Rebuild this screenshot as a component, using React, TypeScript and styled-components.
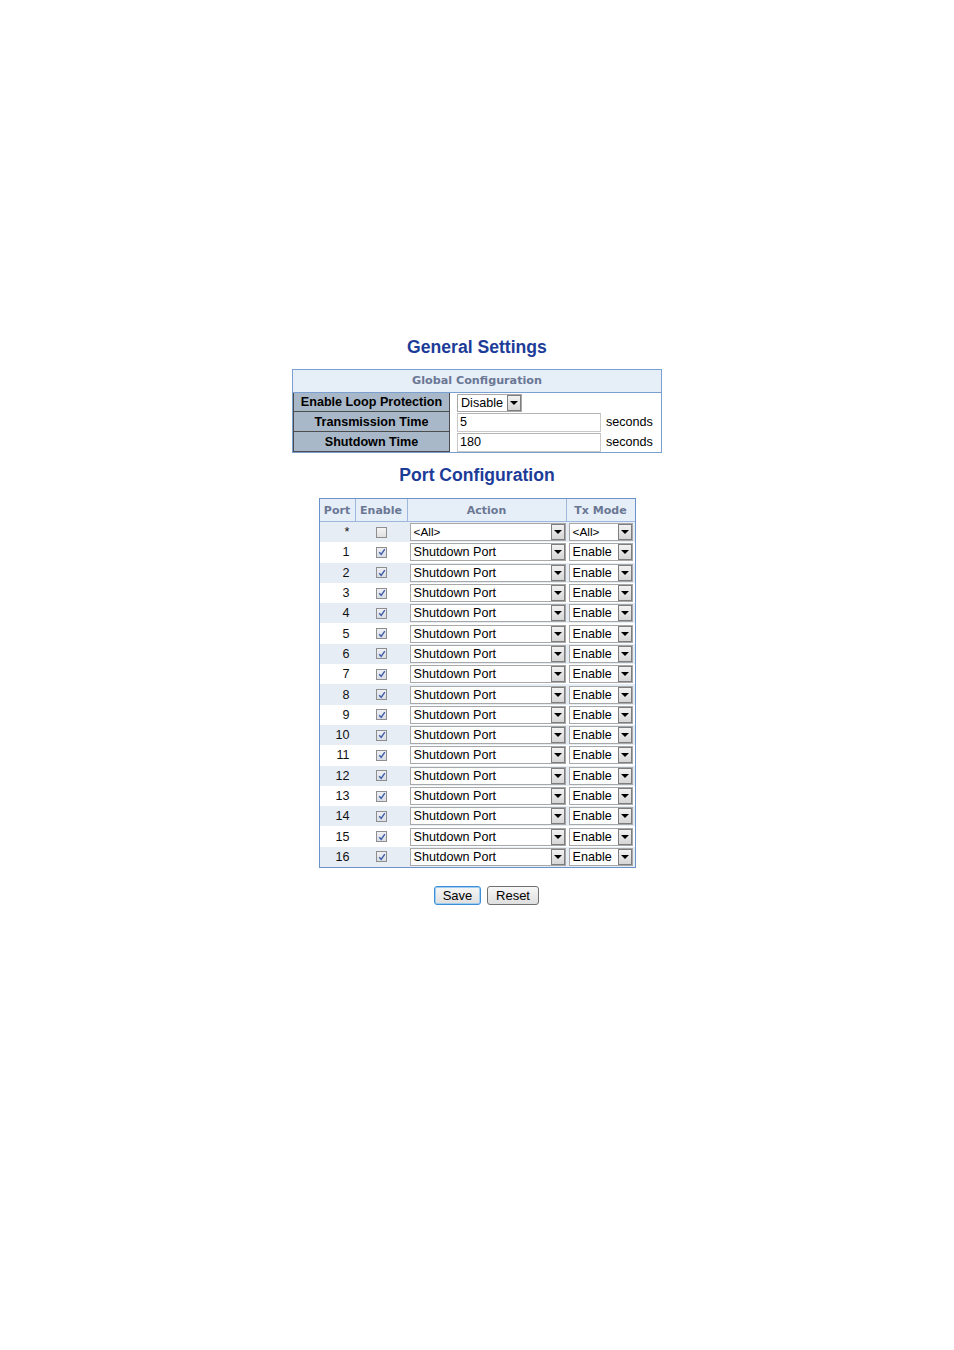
import React from "react";
import styled, { createGlobalStyle } from "styled-components";

const Global = createGlobalStyle`
  html, body { margin: 0; padding: 0; background: #ffffff; }
  body { font-family: "Liberation Sans", Arial, sans-serif; color: #000; }
`;

const Page = styled.div`
  width: 954px;
  min-height: 1350px;
  padding-top: 337px;
  box-sizing: border-box;
  display: flex;
  flex-direction: column;
  align-items: center;
`;

const Title = styled.h1<{ $mt?: number }>`
  margin: ${(p) => p.$mt ?? 0}px 0 0 0;
  height: 20px;
  line-height: 20px;
  font-family: "Liberation Sans", Arial, sans-serif;
  font-weight: bold;
  font-size: 17.6px;
  color: #1c3c98;
  text-align: center;
`;

const GlobalTable = styled.div`
  margin-top: 12px;
  width: 370px;
  box-sizing: border-box;
  border: 1px solid #7aa0d2;
  display: grid;
  grid-template-columns: 157px 1fr;
  grid-template-rows: 23px 19px 20px 20px;
  background: #fff;
`;

const GlobalHeader = styled.div`
  grid-column: 1 / span 2;
  line-height: 22px;
  background: #e6eef8;
  border-bottom: 1px solid #7aa0d2;
  text-align: center;
  font-family: "DejaVu Sans", Verdana, sans-serif;
  font-weight: bold;
  font-size: 11.2px;
  color: #6a7794;
`;

const LabelCell = styled.div`
  background: #a9b8c8;
  border: 1px solid #4d4d4d;
  border-top: none;
  box-sizing: border-box;
  display: flex;
  align-items: center;
  justify-content: center;
  font-weight: bold;
  font-size: 12.6px;
  color: #000;
  white-space: nowrap;
`;

const ValueCell = styled.div`
  display: flex;
  align-items: center;
  gap: 5px;
  padding-left: 7px;
`;

const Seconds = styled.span`
  font-size: 12.6px;
`;

const TextInput = styled.div`
  width: 144px;
  height: 19px;
  box-sizing: border-box;
  border: 1px solid #c9c9c9;
  border-top-color: #b5b5b5;
  font-size: 12.6px;
  line-height: 17px;
  padding-left: 2px;
  background: #fff;
`;

const SelectBox = styled.div<{ $w: number }>`
  width: ${(p) => p.$w}px;
  height: 18px;
  box-sizing: border-box;
  border: 1px solid #a8a8a8;
  background: #fff;
  display: flex;
  align-items: stretch;
`;

const SelectText = styled.span<{ $small?: boolean }>`
  flex: 1;
  padding-left: 3px;
  font-size: ${(p) => (p.$small ? 11.8 : 12.6)}px;
  line-height: 16px;
  white-space: nowrap;
  overflow: hidden;
`;

const ArrowBox = styled.span`
  width: 14px;
  box-sizing: border-box;
  margin: 0 0 0 1px;
  border: 1px solid #7e7e7e;
  background: linear-gradient(#f2f2f2, #d6d6d6);
  display: flex;
  align-items: center;
  justify-content: center;
`;

const Select: React.FC<{ w: number; value: string; small?: boolean }> = ({ w, value, small }) => (
  <SelectBox $w={w}>
    <SelectText $small={small}>{value}</SelectText>
    <ArrowBox>
      <svg width="8" height="4" viewBox="0 0 8 4">
        <polygon points="0,0 8,0 4,4" fill="#000" />
      </svg>
    </ArrowBox>
  </SelectBox>
);

const PortTable = styled.div`
  margin-top: 13px;
  width: 317px;
  box-sizing: border-box;
  border: 1px solid #6b93c9;
  display: flex;
  flex-direction: column;
`;

const Cols = "36px 52px 159px 1fr";

const HeadRow = styled.div`
  display: grid;
  grid-template-columns: ${Cols};
  height: 22px;
  background: #e6eef8;
  border-bottom: 1px solid #9db8dc;
`;

const HeadCell = styled.div<{ $last?: boolean }>`
  border-right: ${(p) => (p.$last ? "none" : "1px solid #9db8dc")};
  text-align: center;
  line-height: 23px;
  font-family: "DejaVu Sans", Verdana, sans-serif;
  font-weight: bold;
  font-size: 11px;
  color: #6a7794;
  white-space: nowrap;
`;

const Row = styled.div<{ $shaded: boolean }>`
  display: grid;
  grid-template-columns: ${Cols};
  height: 20.3px;
  background: ${(p) => (p.$shaded ? "#e7edf5" : "#ffffff")};
  align-items: center;
`;

const PortCell = styled.div`
  text-align: right;
  padding-right: 6px;
  font-size: 12.6px;
  color: #111;
`;

const CenterCell = styled.div`
  display: flex;
  justify-content: center;
  align-items: center;
`;

const SelCell = styled.div`
  display: flex;
  align-items: center;
  padding-left: 2px;
`;

const CheckBox = styled.span<{ $checked: boolean }>`
  width: 11px;
  height: 11px;
  box-sizing: border-box;
  border: 1px solid #8e8e8e;
  background: ${(p) => (p.$checked ? "linear-gradient(#eef0f4, #d9dde5)" : "linear-gradient(#f4f4f4, #e0e0e0)")};
  display: flex;
  align-items: center;
  justify-content: center;
`;

const Buttons = styled.div`
  margin-top: 18px;
  margin-left: 19px;
  display: flex;
  gap: 6px;
`;

const Button = styled.button<{ $primary?: boolean; $w: number }>`
  width: ${(p) => p.$w}px;
  height: 19px;
  padding: 0;
  font-family: "Liberation Sans", Arial, sans-serif;
  font-size: 13px;
  color: #000;
  border-radius: 3px;
  border: 1px solid ${(p) => (p.$primary ? "#3a8fd8" : "#707070")};
  box-shadow: ${(p) => (p.$primary ? "inset 0 0 0 1px #9fcdf0" : "none")};
  background: linear-gradient(#f7f7f7, #dedede);
  line-height: 16px;
`;

const labels = [
  { label: "Enable Loop Protection" },
  { label: "Transmission Time", value: "5" },
  { label: "Shutdown Time", value: "180" },
];

export default function App() {
  const ports = Array.from({ length: 16 }, (_, i) => i + 1);
  return (
    <>
      <Global />
      <Page>
        <Title>General Settings</Title>
        <GlobalTable>
          <GlobalHeader>Global Configuration</GlobalHeader>
          <LabelCell>{labels[0].label}</LabelCell>
          <ValueCell>
            <Select w={65} value="Disable" />
          </ValueCell>
          <LabelCell>{labels[1].label}</LabelCell>
          <ValueCell>
            <TextInput>{labels[1].value}</TextInput>
            <Seconds>seconds</Seconds>
          </ValueCell>
          <LabelCell>{labels[2].label}</LabelCell>
          <ValueCell>
            <TextInput>{labels[2].value}</TextInput>
            <Seconds>seconds</Seconds>
          </ValueCell>
        </GlobalTable>

        <Title $mt={12}>Port Configuration</Title>
        <PortTable>
          <HeadRow>
            <HeadCell>Port</HeadCell>
            <HeadCell>Enable</HeadCell>
            <HeadCell>Action</HeadCell>
            <HeadCell $last>Tx Mode</HeadCell>
          </HeadRow>
          <Row $shaded>
            <PortCell>*</PortCell>
            <CenterCell>
              <CheckBox $checked={false} />
            </CenterCell>
            <SelCell>
              <Select w={156} value="<All>" small />
            </SelCell>
            <SelCell>
              <Select w={64} value="<All>" small />
            </SelCell>
          </Row>
          {ports.map((p) => (
            <Row key={p} $shaded={p % 2 === 0}>
              <PortCell>{p}</PortCell>
              <CenterCell>
                <CheckBox $checked>
                  <svg width="8" height="8" viewBox="0 0 8 8">
                    <path d="M1.2 4.2 L3.2 6.3 L6.8 1.2" stroke="#3f5ca6" strokeWidth="1.4" fill="none" />
                  </svg>
                </CheckBox>
              </CenterCell>
              <SelCell>
                <Select w={156} value="Shutdown Port" />
              </SelCell>
              <SelCell>
                <Select w={64} value="Enable" />
              </SelCell>
            </Row>
          ))}
        </PortTable>
        <Buttons>
          <Button $primary $w={47}>Save</Button>
          <Button $w={52}>Reset</Button>
        </Buttons>
      </Page>
    </>
  );
}
